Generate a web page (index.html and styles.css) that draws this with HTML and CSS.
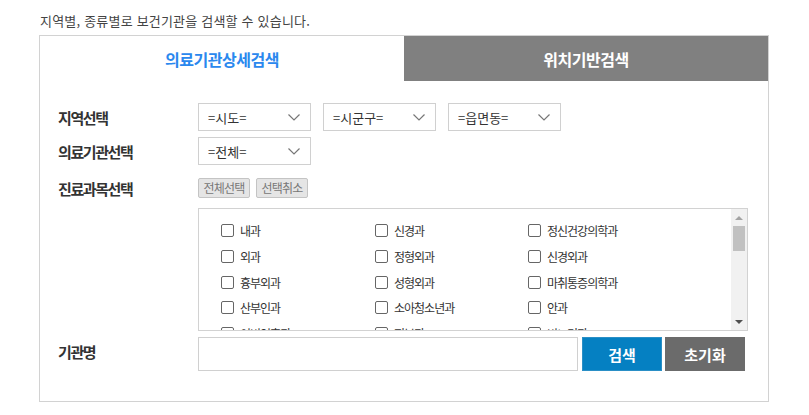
FILE: index.html
```html
<!DOCTYPE html>
<html lang="ko">
<head>
<meta charset="utf-8">
<title>보건기관 검색</title>
<link rel="stylesheet" href="styles.css">
</head>
<body>
<div class="page">
  <p class="intro">지역별, 종류별로 보건기관을 검색할 수 있습니다.</p>
  <div class="box">
    <div class="tabs">
      <div class="tab tab-active">의료기관상세검색</div>
      <div class="tab tab-off">위치기반검색</div>
    </div>
    <div class="form">
      <div class="row row-region">
        <div class="label">지역선택</div>
        <div class="field">
          <select class="sel"><option>=시도=</option></select>
          <select class="sel"><option>=시군구=</option></select>
          <select class="sel"><option>=읍면동=</option></select>
        </div>
      </div>
      <div class="row row-type">
        <div class="label">의료기관선택</div>
        <div class="field">
          <select class="sel"><option>=전체=</option></select>
        </div>
      </div>
      <div class="row row-dept">
        <div class="label">진료과목선택</div>
        <div class="field">
          <button class="mini">전체선택</button>
          <button class="mini">선택취소</button>
        </div>
      </div>
      <div class="row row-list">
        <div class="label"></div>
        <div class="list">
          <div class="list-items">
            <label class="item"><input type="checkbox"><span>내과</span></label>
            <label class="item"><input type="checkbox"><span>신경과</span></label>
            <label class="item"><input type="checkbox"><span>정신건강의학과</span></label>
            <label class="item"><input type="checkbox"><span>외과</span></label>
            <label class="item"><input type="checkbox"><span>정형외과</span></label>
            <label class="item"><input type="checkbox"><span>신경외과</span></label>
            <label class="item"><input type="checkbox"><span>흉부외과</span></label>
            <label class="item"><input type="checkbox"><span>성형외과</span></label>
            <label class="item"><input type="checkbox"><span>마취통증의학과</span></label>
            <label class="item"><input type="checkbox"><span>산부인과</span></label>
            <label class="item"><input type="checkbox"><span>소아청소년과</span></label>
            <label class="item"><input type="checkbox"><span>안과</span></label>
            <label class="item"><input type="checkbox"><span>이비인후과</span></label>
            <label class="item"><input type="checkbox"><span>피부과</span></label>
            <label class="item"><input type="checkbox"><span>비뇨기과</span></label>
            <label class="item"><input type="checkbox"><span>영상의학과</span></label>
            <label class="item"><input type="checkbox"><span>재활의학과</span></label>
            <label class="item"><input type="checkbox"><span>가정의학과</span></label>
          </div>
          <div class="scrollbar">
            <div class="sb-btn sb-up"></div>
            <div class="sb-thumb"></div>
            <div class="sb-track"></div>
            <div class="sb-btn sb-down"></div>
          </div>
        </div>
      </div>
      <div class="row row-name">
        <div class="label">기관명</div>
        <div class="field">
          <input class="name-input" type="text">
          <button class="btn btn-search">검색</button>
          <button class="btn btn-reset">초기화</button>
        </div>
      </div>
    </div>
  </div>
</div>
</body>
</html>
```

FILE: styles.css
```css
* { box-sizing: border-box; }
html, body { margin: 0; padding: 0; background: #fff; }
body {
  font-family: "Noto Sans CJK KR", "Noto Sans", sans-serif;
  color: #333;
}
.page {
  padding-left: 39px;
  width: 769px;
}
.intro {
  margin: 0 0 6px 1px;
  padding-top: 12px;
  font-size: 13px;
  line-height: 17px;
  color: #444;
  letter-spacing: 0.2px;
}
.box {
  border: 1px solid #d2d2d2;
  width: 730px;
  height: 367px;
}
.tabs {
  display: flex;
  height: 45px;
}
.tab {
  flex: 1 1 0;
  display: flex;
  align-items: center;
  justify-content: center;
  font-size: 16px;
  font-weight: 700;
  letter-spacing: -0.5px;
}
.tab-active { color: #2a88ee; background: #fff; }
.tab-off { color: #fff; background: #808080; }

.form {
  padding: 22px 0 0 18px;
}
.row {
  display: flex;
  align-items: center;
}
.label {
  width: 140px;
  flex: 0 0 140px;
  font-size: 15px;
  font-weight: 700;
  color: #333;
  letter-spacing: -1.4px;
}
.field {
  display: flex;
  align-items: center;
}
.row-region { height: 28px; }
.row-region .field { gap: 12px; }
.row-type { height: 28px; margin-top: 6px; }
.row-dept { height: 20px; margin-top: 13px; }
.row-dept .field { gap: 6px; }
.row-list { margin-top: 10px; align-items: flex-start; }
.row-name { height: 34px; margin-top: 6px; }
.row-name .label { margin-top: -5px; }

.sel {
  -webkit-appearance: none;
  appearance: none;
  width: 113px;
  height: 28px;
  border: 1px solid #d0d0d0;
  border-radius: 0;
  background: #fff url("data:image/svg+xml;utf8,<svg xmlns='http://www.w3.org/2000/svg' width='12' height='7' viewBox='0 0 12 7'><path d='M0.5 0.5 L6 6 L11.5 0.5' fill='none' stroke='%23777' stroke-width='1.2'/></svg>") no-repeat right 10px center;
  padding: 0 0 0 9px;
  font-family: "Noto Sans CJK KR", "Noto Sans", sans-serif;
  font-size: 13px;
  color: #333;
  outline: none;
}

.mini {
  height: 20px;
  padding: 0 3px;
  border: 1px solid #c4c4c4;
  border-radius: 2px;
  background: #e5e5e5;
  color: #777;
  font-family: "Noto Sans CJK KR", "Noto Sans", sans-serif;
  font-size: 12px;
  letter-spacing: -0.8px;
  line-height: 18px;
  width: 52px;
}

.list {
  display: flex;
  width: 550px;
  height: 123px;
  border: 1px solid #d2d2d2;
  overflow: hidden;
}
.list-items {
  flex: 1 1 auto;
  display: grid;
  grid-template-columns: 154px 153px 1fr;
  grid-auto-rows: 25.7px;
  padding: 9px 0 0 22px;
  overflow: hidden;
}
.item {
  display: flex;
  align-items: center;
  font-size: 12px;
  color: #333;
  letter-spacing: -1px;
}
.item input {
  -webkit-appearance: none;
  appearance: none;
  width: 13px;
  height: 13px;
  margin: 0 6px 0 0;
  border: 1px solid #666;
  border-radius: 2px;
  background: #fff;
  flex: 0 0 13px;
}

.scrollbar {
  flex: 0 0 16px;
  width: 16px;
  background: #f1f1f1;
  display: flex;
  flex-direction: column;
  align-items: center;
}
.sb-btn {
  height: 17px;
  width: 16px;
  display: flex;
  align-items: center;
  justify-content: center;
}
.sb-up::before {
  content: "";
  border-left: 4px solid transparent;
  border-right: 4px solid transparent;
  border-bottom: 4px solid #a3a3a3;
}
.sb-down::before {
  content: "";
  border-left: 4px solid transparent;
  border-right: 4px solid transparent;
  border-top: 4px solid #505050;
}
.sb-thumb {
  width: 12px;
  height: 25px;
  background: #c1c1c1;
}
.sb-track { flex: 1 1 auto; }

.name-input {
  width: 380px;
  height: 34px;
  border: 1px solid #d0d0d0;
  margin: 0 4px 0 0;
  padding: 0 8px;
  outline: none;
}
.btn {
  width: 80px;
  height: 34px;
  border: 0;
  color: #fff;
  font-family: "Noto Sans CJK KR", "Noto Sans", sans-serif;
  font-size: 15px;
  font-weight: 700;
  padding: 0;
}
.btn-search { background: #0580c2; border: 1px solid #2a8fc6; margin-right: 3px; }
.btn-reset { background: #6b6b6b; }
```
